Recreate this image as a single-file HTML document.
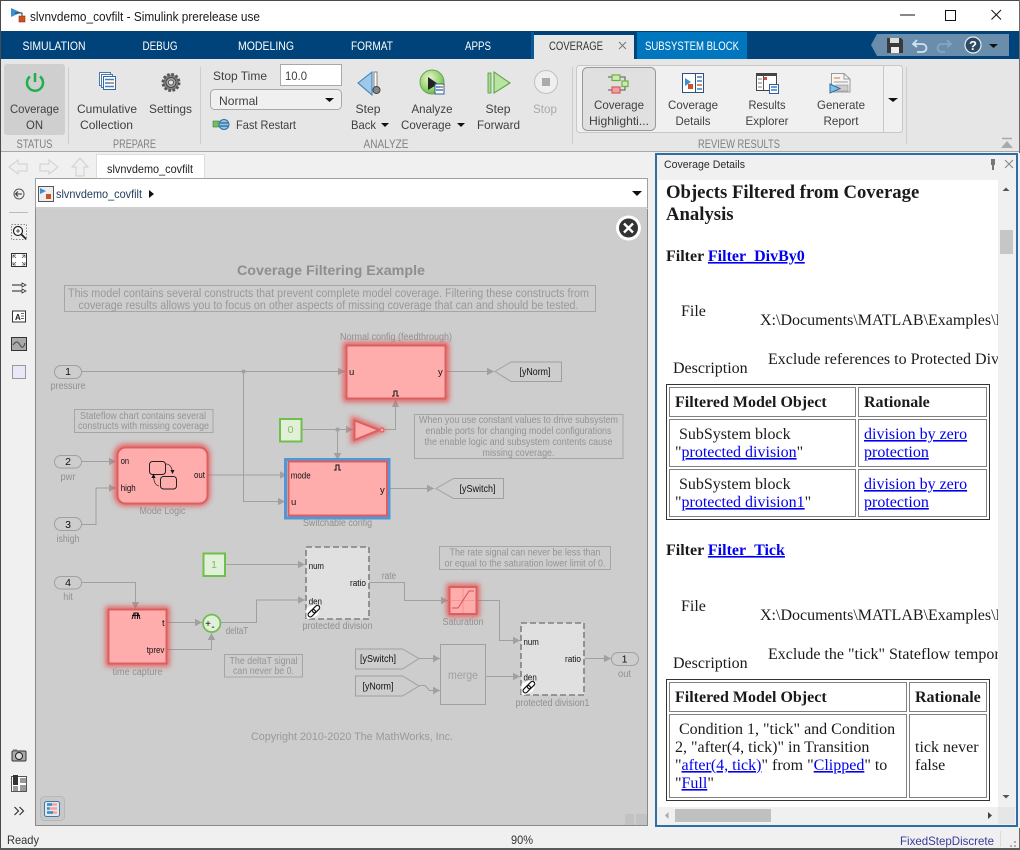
<!DOCTYPE html>
<html><head><meta charset="utf-8"><title>slvnvdemo_covfilt - Simulink prerelease use</title>
<style>
html,body{margin:0;padding:0;width:1020px;height:850px;overflow:hidden;background:#f0f0f0}
svg{display:block}
text{font-family:"Liberation Sans",sans-serif;white-space:pre}
.u{font-size:12px;fill:#404040}
.g{font-size:11.500px;fill:#808080;text-anchor:middle}
.t{font-size:12px;fill:#fff;text-anchor:middle;font-weight:400}
.n{font-size:10.500px;fill:#949494;text-anchor:middle}
.l{font-size:10px;fill:#909090;text-anchor:middle}
.p{font-size:9.500px;fill:#111}
.k{font-size:10.500px;fill:#111;text-anchor:middle}
.s{font-family:"Liberation Serif",serif;font-size:16px;fill:#1a1a1a}
.b{font-family:"Liberation Serif",serif;font-size:16px;font-weight:700;fill:#1a1a1a}
.h{font-family:"Liberation Serif",serif;font-size:18.720px;font-weight:700;fill:#1a1a1a}
.a{fill:#0000ee;text-decoration:underline}
.w{fill:none;stroke:#a0a0a0;stroke-width:1}
.nb{fill:none;stroke:#a6a6a6;stroke-width:1}
</style></head><body>
<svg width="1020" height="850" viewBox="0 0 1020 850" xmlns="http://www.w3.org/2000/svg">
<defs>
<marker id="m" markerUnits="userSpaceOnUse" markerWidth="9" markerHeight="9" refX="7" refY="4" orient="auto"><path d="M0 .3L7 4L0 7.700z" fill="#a0a0a0"/></marker>
<filter id="gl" x="-40%" y="-40%" width="180%" height="180%"><feGaussianBlur stdDeviation="2.600"/></filter>
<clipPath id="cp"><rect x="658" y="180" width="340" height="627"/></clipPath>
<radialGradient id="gr" cx=".4" cy=".35" r=".8"><stop offset="0" stop-color="#e6f5cf"/><stop offset=".6" stop-color="#93cf6b"/><stop offset="1" stop-color="#4e9c3a"/></radialGradient>
</defs>

<!-- window chrome -->
<rect width="1020" height="850" fill="#f0f0f0"/>
<rect x="0" y="0" width="1020" height="31" fill="#fff"/>
<rect x="0" y="0" width="1020" height="1" fill="#4a4a4a"/>
<rect x="0" y="0" width="1" height="848" fill="#4a4a4a"/>
<rect x="1019" y="0" width="1" height="848" fill="#6a6a6a"/>
<path d="M11 8L21 12.500L11 17z" fill="#3d8fd1"/><path d="M15 13H22V17" fill="none" stroke="#333"/><rect x="19" y="16" width="6" height="6" fill="#d1501f" stroke="#8a3a18" stroke-width=".6"/>
<text x="30" y="21" font-size="13" fill="#1a1a1a" textLength="230" lengthAdjust="spacingAndGlyphs">slvnvdemo_covfilt - Simulink prerelease use</text>
<path d="M900 15H915" stroke="#111" stroke-width="1"/>
<rect x="945.500" y="10.500" width="10" height="10" fill="none" stroke="#111"/>
<path d="M991.500 10L1001 19.500M1001 10L991.500 19.500" stroke="#111" stroke-width="1"/>

<!-- tab strip -->
<rect x="1" y="31" width="1018" height="28" fill="#00437a"/>
<text class="t" x="54" y="50" textLength="63" lengthAdjust="spacingAndGlyphs">SIMULATION</text>
<text class="t" x="160" y="50" textLength="35" lengthAdjust="spacingAndGlyphs">DEBUG</text>
<text class="t" x="266" y="50" textLength="56" lengthAdjust="spacingAndGlyphs">MODELING</text>
<text class="t" x="372" y="50" textLength="42" lengthAdjust="spacingAndGlyphs">FORMAT</text>
<text class="t" x="478" y="50" textLength="26" lengthAdjust="spacingAndGlyphs">APPS</text>
<rect x="531" y="32" width="3" height="27" fill="#0a5a96"/>
<rect x="534" y="35" width="100" height="24" fill="#e6e6e6"/>
<text class="t" x="576" y="50" style="fill:#333" textLength="54" lengthAdjust="spacingAndGlyphs">COVERAGE</text>
<path d="M619 42L626 49M626 42L619 49" stroke="#777" stroke-width="1"/>
<rect x="637" y="32" width="110" height="27" fill="#0076be"/>
<text class="t" x="692" y="50" textLength="94" lengthAdjust="spacingAndGlyphs">SUBSYSTEM BLOCK</text>
<path d="M871 45L877 34H1009V56H877z" fill="#6a8dab"/>
<path d="M887 38H901L903 40V53H887z" fill="#3a3a3a"/><rect x="890" y="38" width="9" height="5" fill="#ddd"/><rect x="891" y="47" width="8" height="6" fill="#eee"/>
<path d="M917 40L913 44L917 47M913.500 44H922C928 44 928 52 922 52H917" fill="none" stroke="#cfe3f3" stroke-width="1.800"/>
<path d="M947 40L951 44L947 47M950.500 44H942C936 44 936 52 942 52H945" fill="none" stroke="#87a6c0" stroke-width="1.800"/>
<circle cx="973" cy="45" r="8" fill="#2c4a63" stroke="#e8eef3" stroke-width="1.200"/><text x="973" y="50" font-size="13" font-weight="700" fill="#fff" text-anchor="middle">?</text>
<path d="M989 44H998L993.500 48z" fill="#111"/>

<!-- ribbon -->
<rect x="1" y="59" width="1018" height="92" fill="#e6e6e6"/>
<rect x="1" y="151" width="1018" height="1" fill="#a8a8a8"/>
<rect x="4" y="64" width="61" height="71" rx="3" fill="#cfcfcf"/>
<path d="M68.500 67V144M200.500 67V144M572.500 67V144M906.500 67V144" stroke="#cdcdcd"/>
<path d="M30 76.500A8 8 0 1 0 40 76.500" fill="none" stroke="#1fb04b" stroke-width="2.500"/><path d="M35 73V82" stroke="#1fb04b" stroke-width="2.500"/>
<text class="u" x="10" y="113" textLength="49" lengthAdjust="spacingAndGlyphs">Coverage</text>
<text class="u" x="26" y="129" textLength="17" lengthAdjust="spacingAndGlyphs">ON</text>
<text class="g" x="34.500" y="148" textLength="36" lengthAdjust="spacingAndGlyphs">STATUS</text>
<rect x="99.500" y="72.500" width="11" height="13" fill="#fff" stroke="#4a78ad"/><rect x="101.500" y="74.500" width="11" height="13" fill="#fff" stroke="#4a78ad"/><rect x="103.500" y="76.500" width="12" height="13" fill="#fff" stroke="#3a669b"/>
<path d="M105 79.500H114M105 83H114M105 86.500H114" stroke="#3d7fc4" stroke-width="1.500"/><path d="M110 83H114" stroke="#e8873a" stroke-width="1.500"/>
<text class="u" x="77" y="113" textLength="60" lengthAdjust="spacingAndGlyphs">Cumulative</text>
<text class="u" x="80" y="129" textLength="53" lengthAdjust="spacingAndGlyphs">Collection</text>
<circle cx="171" cy="82.500" r="8" fill="#888" stroke="#555" stroke-width="3" stroke-dasharray="2.500 1.700"/><circle cx="171" cy="82.500" r="5" fill="#aaa" stroke="#444"/><circle cx="171" cy="82.500" r="2.500" fill="#e6e6e6" stroke="#555"/>
<text class="u" x="149" y="113" textLength="43" lengthAdjust="spacingAndGlyphs">Settings</text>
<text class="g" x="134.500" y="148" textLength="43" lengthAdjust="spacingAndGlyphs">PREPARE</text>
<text class="u" x="213" y="80" textLength="54" lengthAdjust="spacingAndGlyphs">Stop Time</text>
<rect x="280.500" y="64.500" width="61" height="21" fill="#fff" stroke="#a8a8a8"/>
<text class="u" x="285" y="80" textLength="22" lengthAdjust="spacingAndGlyphs">10.0</text>
<rect x="210.500" y="89.500" width="131" height="20" rx="4" fill="#f0f0f0" stroke="#a8a8a8"/>
<text class="u" x="219" y="105" textLength="39" lengthAdjust="spacingAndGlyphs">Normal</text>
<path d="M325 98H334L329.500 102z" fill="#111"/>
<rect x="213" y="121" width="6" height="6" fill="#6fbf5a" stroke="#3d7f3a" stroke-width=".6"/><circle cx="224" cy="124.500" r="5" fill="#8fc5ea" stroke="#2f6ea5"/><path d="M220 123H228M228 126H220" stroke="#1a4f80"/>
<text class="u" x="236" y="129" textLength="60" lengthAdjust="spacingAndGlyphs">Fast Restart</text>
<path d="M358 83L372 72V95z" fill="#9dcaea" stroke="#3b7db5"/><rect x="374" y="72" width="3" height="17" fill="#fff" stroke="#666" stroke-width=".8"/><circle cx="376.500" cy="90" r="3.500" fill="#888" stroke="#444"/>
<text class="u" x="368" y="113" text-anchor="middle" textLength="25" lengthAdjust="spacingAndGlyphs">Step</text>
<text class="u" x="351" y="129" textLength="25" lengthAdjust="spacingAndGlyphs">Back</text>
<path d="M381 123H389L385 127z" fill="#111"/>
<circle cx="432" cy="82" r="12" fill="url(#gr)" stroke="#6aa84f"/><path d="M428 77L438 84L428 90z" fill="#222"/><rect x="435" y="84" width="9" height="10" fill="#fff" stroke="#2f5f9a"/><path d="M436 87H443M436 90H443" stroke="#3d7fc4" stroke-width="1.500"/><path d="M440 87H443" stroke="#e8873a" stroke-width="1.500"/>
<text class="u" x="432" y="113" text-anchor="middle" textLength="41" lengthAdjust="spacingAndGlyphs">Analyze</text>
<text class="u" x="401" y="129" textLength="50" lengthAdjust="spacingAndGlyphs">Coverage</text>
<path d="M457 123H465L461 127z" fill="#111"/>
<rect x="488" y="73" width="3" height="20" fill="#a8d98f" stroke="#4e9c3a" stroke-width=".8"/><path d="M494 72L510 83L494 93z" fill="#b9e3a0" stroke="#4e9c3a"/>
<text class="u" x="498" y="113" text-anchor="middle" textLength="25" lengthAdjust="spacingAndGlyphs">Step</text>
<text class="u" x="477" y="129" textLength="43" lengthAdjust="spacingAndGlyphs">Forward</text>
<circle cx="546" cy="82" r="11.500" fill="#efefef" stroke="#c0c0c0"/><rect x="542" y="78" width="8" height="8" fill="#ababab"/>
<text class="u" x="545" y="113" text-anchor="middle" style="fill:#aaa" textLength="24" lengthAdjust="spacingAndGlyphs">Stop</text>
<text class="g" x="386" y="148" textLength="45" lengthAdjust="spacingAndGlyphs">ANALYZE</text>
<rect x="576.500" y="65.500" width="326" height="67" rx="3" fill="#f0f0f0" stroke="#c8c8c8"/>
<path d="M883.500 66V132" stroke="#c8c8c8"/>
<rect x="582.500" y="67.500" width="73" height="63" rx="5" fill="#e0e0e0" stroke="#999"/>
<path d="M608 77H612M620 77H625V84H628M608 90H612M620 90H625V87" fill="none" stroke="#555"/>
<rect x="612" y="75" width="8" height="5.500" fill="#cfe8b8" stroke="#6ab03f" stroke-width="1.200"/><rect x="622" y="81" width="6" height="5.500" fill="#cfe8b8" stroke="#6ab03f" stroke-width="1.200"/><rect x="612" y="87" width="8" height="6" fill="#f2a0a0" stroke="#d85a5a" stroke-width="1.200"/>
<text class="u" x="619" y="109" text-anchor="middle" textLength="50" lengthAdjust="spacingAndGlyphs">Coverage</text>
<text class="u" x="619" y="125" text-anchor="middle" textLength="60" lengthAdjust="spacingAndGlyphs">Highlighti...</text>
<rect x="682.500" y="73.500" width="21" height="19" fill="#fff" stroke="#33507a"/><path d="M695.500 74V92" stroke="#33507a"/>
<path d="M685 78L691 82L685 86z" fill="#3d8fd1"/><rect x="688" y="84" width="5" height="5" fill="#d1501f"/>
<path d="M697 77H702M697 81H702M697 85H702M697 89H702" stroke="#3d7fc4" stroke-width="1.500"/><path d="M697 85H702" stroke="#e8734a" stroke-width="1.500"/>
<text class="u" x="693" y="109" text-anchor="middle" textLength="50" lengthAdjust="spacingAndGlyphs">Coverage</text>
<text class="u" x="693" y="125" text-anchor="middle" textLength="35" lengthAdjust="spacingAndGlyphs">Details</text>
<rect x="756.500" y="73.500" width="20" height="17" fill="#fff" stroke="#444"/><rect x="756" y="73" width="21" height="3" fill="#444"/><path d="M763.500 76V90" stroke="#555"/><path d="M758 79H762M758 83H762M758 87H762" stroke="#777"/><rect x="764" y="77" width="3" height="3" fill="#d84a4a"/>
<rect x="769.500" y="84.500" width="9" height="9" fill="#fff" stroke="#2f5f9a"/><path d="M771 87H777M771 90H777" stroke="#3d7fc4" stroke-width="1.500"/>
<text class="u" x="767" y="109" text-anchor="middle" textLength="37" lengthAdjust="spacingAndGlyphs">Results</text>
<text class="u" x="767" y="125" text-anchor="middle" textLength="43" lengthAdjust="spacingAndGlyphs">Explorer</text>
<path d="M831.500 73.500H844L850 79V92H831.500z" fill="#f6f6f6" stroke="#999"/><path d="M844 74V79H850" fill="none" stroke="#999"/><path d="M834 78H840" stroke="#e0702a"/><path d="M834 82H848" stroke="#999"/><rect x="836" y="85" width="12" height="6" fill="#ccc" stroke="#888" stroke-width=".6"/>
<path d="M830 84L840 88.500L830 93z" fill="#7cc0ea" stroke="#2f6ea5"/>
<text class="u" x="841" y="109" text-anchor="middle" textLength="48" lengthAdjust="spacingAndGlyphs">Generate</text>
<text class="u" x="841" y="125" text-anchor="middle" textLength="35" lengthAdjust="spacingAndGlyphs">Report</text>
<path d="M888 98H898L893 102z" fill="#111"/>
<text class="g" x="739" y="148" textLength="82" lengthAdjust="spacingAndGlyphs">REVIEW RESULTS</text>
<path d="M1002 138.500H1012" stroke="#aaa" stroke-width="1.500"/><path d="M1001 148L1007 141L1013 148z" fill="#aaa"/>

<!-- doc tab row -->
<rect x="1" y="152" width="653" height="27" fill="#f0f0f0"/>
<path d="M9 167L18 160V164H27V171H18V174z" fill="#efefef" stroke="#cfcfcf"/>
<path d="M58 167L49 160V164H40V171H49V174z" fill="#efefef" stroke="#cfcfcf"/>
<path d="M80 158L88 167H84V176H76V167H72z" fill="#efefef" stroke="#cfcfcf"/>
<rect x="96.500" y="154.500" width="108" height="25" fill="#fff" stroke="#dcdcdc"/>
<text x="107" y="173" font-size="12" fill="#222" textLength="86" lengthAdjust="spacingAndGlyphs">slvnvdemo_covfilt</text>

<!-- left toolbar -->
<rect x="1" y="179" width="34" height="647" fill="#f0f0f0"/>
<rect x="35" y="179" width="1" height="647" fill="#8a8a8a"/>
<circle cx="19" cy="194" r="5" fill="#eee" stroke="#555"/><path d="M22 194H16M18 191.500L15.500 194L18 196.500" fill="none" stroke="#333"/>
<path d="M9 212.500H28" stroke="#bbb"/>
<rect x="11.500" y="224.500" width="15" height="15" fill="none" stroke="#888" stroke-dasharray="1.500 1.500"/><circle cx="18" cy="231" r="4.500" fill="#fff" stroke="#222" stroke-width="1.200"/><path d="M21.500 234.500L26 239" stroke="#222" stroke-width="1.800"/><path d="M16 231H20M18 229V233" stroke="#222" stroke-width=".8"/>
<rect x="11.500" y="253.500" width="15" height="13" fill="#fff" stroke="#333"/><path d="M13 255L16 258M13 255H16M13 255V258M25 255L22 258M25 255H22M25 255V258M13 265L16 262M13 265H16M13 265V262M25 265L22 262M25 265H22M25 265V262" stroke="#555" stroke-width=".8" fill="none"/>
<path d="M12 285H25M12 291H25" stroke="#222"/><path d="M22 283L26 285L22 287zM22 289L26 291L22 293z" fill="#fff" stroke="#222" stroke-width=".7"/>
<rect x="12.500" y="311" width="13" height="11" fill="#fff" stroke="#333"/><text x="15" y="320" font-size="8" font-weight="700" fill="#222">A</text><path d="M21 313.500H24M21 316H24M21 318.500H24" stroke="#333" stroke-width=".7"/>
<rect x="11.500" y="337.500" width="15" height="13" fill="#aaa" stroke="#333"/><path d="M13 345C16 341 18 341 20 345S24 347 25 343" fill="none" stroke="#555" stroke-width="1.200"/>
<rect x="12.500" y="365.500" width="13" height="13" fill="#e8e8f8" stroke="#999"/>
<rect x="12" y="751" width="14" height="10" rx="1" fill="#aaa" stroke="#333"/><circle cx="19" cy="756" r="3.500" fill="#ddd" stroke="#222"/><rect x="13" y="749.500" width="4" height="2" fill="#666"/>
<rect x="11.500" y="776.500" width="15" height="15" fill="#fff" stroke="#555"/><rect x="13" y="775" width="5" height="10" fill="#333"/><rect x="13" y="786" width="5" height="5" fill="#999"/><rect x="20" y="778" width="6" height="5" fill="#999"/><rect x="20" y="785" width="6" height="6" fill="#999"/>
<path d="M14.500 807L18.500 811L14.500 815M19.500 807L23.500 811L19.500 815" fill="none" stroke="#333" stroke-width="1.200"/>

<!-- address bar -->
<rect x="36" y="179" width="612" height="30" fill="#fff"/>
<rect x="35.500" y="178.500" width="612" height="29.500" fill="none" stroke="#a0a0a0"/>
<rect x="38.500" y="186.500" width="15" height="15" fill="#eee" stroke="#555"/>
<path d="M40 188L46 191L40 194z" fill="#3d8fd1"/><rect x="46" y="194" width="5" height="5" fill="#d1501f"/>
<text x="56" y="198" font-size="12" fill="#1f3a5a" textLength="86" lengthAdjust="spacingAndGlyphs">slvnvdemo_covfilt</text>
<path d="M149 190L154 194L149 198z" fill="#111"/>
<path d="M632 191H642L637 196z" fill="#111"/>

<!-- canvas -->
<rect x="36" y="209" width="611.500" height="616" fill="#cdcdcd"/>
<path d="M35.500 825.500H647.500V209" fill="none" stroke="#8a8a8a"/>

<!-- close -->
<circle cx="628.500" cy="228" r="12.500" fill="#fff"/><circle cx="628.500" cy="228" r="9.500" fill="#333"/><path d="M624 223.500L633 232.500M633 223.500L624 232.500" stroke="#fff" stroke-width="2.400"/>

<text x="331" y="275" font-size="14" font-weight="700" fill="#8e8e8e" text-anchor="middle" textLength="188" lengthAdjust="spacingAndGlyphs">Coverage Filtering Example</text>
<rect x="64.500" y="285.500" width="531" height="26" class="nb"/>
<text x="328.500" y="297" font-size="11.500" fill="#999" text-anchor="middle" textLength="521" lengthAdjust="spacingAndGlyphs">This model contains several constructs that prevent complete model coverage. Filtering these constructs from</text>
<text x="328.500" y="309" font-size="11.500" fill="#999" text-anchor="middle" textLength="500" lengthAdjust="spacingAndGlyphs">coverage results allows you to focus on other aspects of missing coverage that can and should be tested.</text>

<!-- wires -->
<g class="w">
<path d="M82 371.500H345" marker-end="url(#m)"/>
<path d="M243.500 371.500V501.500H285" marker-end="url(#m)"/>
<path d="M446 371.500H494" marker-end="url(#m)"/>
<path d="M302 429.500H353" marker-end="url(#m)"/>
<path d="M337.500 429.500V460" marker-end="url(#m)"/>
<path d="M385 429.500H395.500V400" marker-end="url(#m)"/>
<path d="M82 461.500H116" marker-end="url(#m)"/>
<path d="M82 524.500H96V488H116" marker-end="url(#m)"/>
<path d="M208 475H287" marker-end="url(#m)"/>
<path d="M390 488.500H434" marker-end="url(#m)"/>
<path d="M82 582.500H135.500V609" marker-end="url(#m)"/>
<path d="M167 622.500H202" marker-end="url(#m)"/>
<path d="M167 649.500H211.500V633" marker-end="url(#m)"/>
<path d="M221 622.500H256.500V600H305" marker-end="url(#m)"/>
<path d="M226 564.500H305" marker-end="url(#m)"/>
<path d="M369 582.500H404.500V600.500H448" marker-end="url(#m)"/>
<path d="M477 600.500H499.500V640.500H520" marker-end="url(#m)"/>
<path d="M419 658.500H440" marker-end="url(#m)"/>
<path d="M419 685.500H425L429.500 690.500H440" marker-end="url(#m)"/>
<path d="M486 676.500H520" marker-end="url(#m)"/>
<path d="M585 658.500H611" marker-end="url(#m)"/>
</g>
<circle cx="243.500" cy="371.500" r="2" fill="#a0a0a0"/><circle cx="337.500" cy="429.500" r="2" fill="#a0a0a0"/>

<!-- inports/outports -->
<g fill="#cdcdcd" stroke="#a0a0a0"><rect x="54.500" y="365.500" width="27" height="13" rx="6.500"/><rect x="54.500" y="455.500" width="27" height="12.500" rx="6.200"/><rect x="54.500" y="517.500" width="27" height="13" rx="6.500"/><rect x="54.500" y="576.500" width="27" height="12.500" rx="6.200"/><rect x="611.500" y="652.500" width="27" height="13" rx="6.500"/></g>
<text class="k" x="68" y="375">1</text><text class="k" x="68" y="465">2</text><text class="k" x="68" y="528">3</text><text class="k" x="68" y="586">4</text><text class="k" x="624.500" y="662.500">1</text>
<text class="l" x="68" y="389" textLength="35" lengthAdjust="spacingAndGlyphs">pressure</text><text class="l" x="68" y="480" textLength="15" lengthAdjust="spacingAndGlyphs">pwr</text><text class="l" x="68" y="542" textLength="23" lengthAdjust="spacingAndGlyphs">ishigh</text><text class="l" x="68" y="600" textLength="9.500" lengthAdjust="spacingAndGlyphs">hit</text><text class="l" x="624.500" y="677" textLength="13" lengthAdjust="spacingAndGlyphs">out</text>

<!-- notes -->
<rect x="74.500" y="409.500" width="138.500" height="23" class="nb"/>
<text class="n" x="143" y="419" textLength="126" lengthAdjust="spacingAndGlyphs">Stateflow chart contains several</text>
<text class="n" x="143.500" y="429" textLength="131" lengthAdjust="spacingAndGlyphs">constructs with missing coverage</text>
<rect x="414.500" y="414.500" width="208.500" height="44" class="nb"/>
<text class="n" x="518.500" y="423" textLength="199" lengthAdjust="spacingAndGlyphs">When you use constant values to drive subsystem</text>
<text class="n" x="518.500" y="434" textLength="186" lengthAdjust="spacingAndGlyphs">enable ports for changing model configurations</text>
<text class="n" x="518.500" y="445" textLength="188" lengthAdjust="spacingAndGlyphs">the enable logic and subsystem contents cause</text>
<text class="n" x="518.500" y="456" textLength="72" lengthAdjust="spacingAndGlyphs">missing coverage.</text>
<rect x="439.500" y="546.500" width="171" height="23" class="nb"/>
<text class="n" x="525" y="555.500" textLength="151" lengthAdjust="spacingAndGlyphs">The rate signal can never be less than</text>
<text class="n" x="525" y="566.500" textLength="161" lengthAdjust="spacingAndGlyphs">or equal to the saturation lower limit of 0.</text>
<rect x="224.500" y="654.500" width="78" height="22.500" class="nb"/>
<text class="n" x="263.500" y="664" textLength="68" lengthAdjust="spacingAndGlyphs">The deltaT signal</text>
<text class="n" x="263.500" y="674" textLength="61" lengthAdjust="spacingAndGlyphs">can never be 0.</text>
<text x="352" y="740" font-size="11" fill="#999" text-anchor="middle" textLength="202" lengthAdjust="spacingAndGlyphs">Copyright 2010-2020 The MathWorks, Inc.</text>

<!-- glows -->
<g fill="none" stroke="#ee3a3a" stroke-width="6" filter="url(#gl)" opacity=".75">
<rect x="346" y="345" width="100" height="54"/>
<rect x="117" y="447" width="90" height="56" rx="8"/>
<rect x="108.500" y="609.500" width="58" height="54"/>
<rect x="449.500" y="587" width="27" height="27"/>
<path d="M354 420V440L379 430z"/>
</g>

<!-- Normal config -->
<rect x="346.500" y="345.500" width="99" height="53" fill="#ffacac" stroke="#dc5f5f" stroke-width="2"/>
<text class="l" x="396" y="340" textLength="112" lengthAdjust="spacingAndGlyphs">Normal config (feedthrough)</text>
<text class="p" x="349" y="375">u</text><text class="p" x="438" y="375">y</text>
<path d="M392 396H394V391H397V396H399" fill="none" stroke="#111" stroke-width="1"/>

<!-- goto -->
<path d="M495 371.500L511 362H561.500V381.500H511z" fill="#cdcdcd" stroke="#a0a0a0"/>
<text class="k" x="535" y="375" textLength="31" lengthAdjust="spacingAndGlyphs">[yNorm]</text>
<path d="M436 488.500L453.500 478.500H503.500V498.500H453.500z" fill="#cdcdcd" stroke="#a0a0a0"/>
<text class="k" x="477.500" y="492" textLength="36" lengthAdjust="spacingAndGlyphs">[ySwitch]</text>

<!-- constant 0 / not -->
<rect x="280" y="419" width="21.500" height="22.500" fill="#e2f0da" stroke="#6fc04b" stroke-width="2"/>
<text x="290.500" y="433" font-size="10.500" fill="#7cc05c" text-anchor="middle">0</text>
<path d="M354.500 420.500V440L379 430z" fill="#ffacac" stroke="#dc5f5f" stroke-width="2"/>
<circle cx="382" cy="430" r="2" fill="#ffacac" stroke="#dc5f5f" stroke-width="1.200"/>

<!-- Mode Logic -->
<rect x="117.500" y="447.500" width="90" height="56" rx="8" fill="#ffacac" stroke="#dc5f5f" stroke-width="2"/>
<text class="p" x="120.700" y="464" textLength="8.300" lengthAdjust="spacingAndGlyphs">on</text><text class="p" x="120.700" y="491" textLength="15" lengthAdjust="spacingAndGlyphs">high</text><text class="p" x="194" y="478" textLength="11" lengthAdjust="spacingAndGlyphs">out</text>
<text class="l" x="162.500" y="514" textLength="46" lengthAdjust="spacingAndGlyphs">Mode Logic</text>
<rect x="149.500" y="461.500" width="16" height="13" rx="3" fill="none" stroke="#222"/>
<rect x="160.500" y="476.500" width="16" height="12.500" rx="3" fill="none" stroke="#222"/>
<path d="M166 464C170 464 172 467 172.500 473" fill="none" stroke="#333" stroke-width=".8"/><path d="M170.500 470H174.500L172.500 474z" fill="#111"/>
<path d="M159 486C155 485 154 482 153.500 476" fill="none" stroke="#333" stroke-width=".8"/><path d="M151.500 478H155.500L153.500 473.500z" fill="#111"/>

<!-- Switchable config -->
<rect x="285.500" y="459.500" width="103.500" height="58.500" fill="none" stroke="#4f97d8" stroke-width="3"/>
<rect x="288.500" y="461.500" width="98.500" height="54" fill="#ffacac" stroke="#dc5f5f" stroke-width="2"/>
<text class="p" x="290.700" y="478.500" textLength="20" lengthAdjust="spacingAndGlyphs">mode</text><text class="p" x="291" y="505">u</text><text class="p" x="380" y="493">y</text>
<path d="M334 470H336V465H339V470H341" fill="none" stroke="#111"/>
<text class="l" x="337.500" y="526" textLength="69" lengthAdjust="spacingAndGlyphs">Switchable config</text>

<!-- time capture -->
<rect x="108.500" y="609.500" width="58" height="54" fill="#ffacac" stroke="#dc5f5f" stroke-width="2"/>
<path d="M132 619L134 613H138L140 619M132 615.500H140M135 613V619M137.500 613V619" fill="none" stroke="#111" stroke-width="1"/>
<text class="p" x="162" y="626">t</text><text class="p" x="146.700" y="653" textLength="17.700" lengthAdjust="spacingAndGlyphs">tprev</text>
<text class="l" x="137.500" y="675" textLength="50" lengthAdjust="spacingAndGlyphs">time capture</text>

<!-- sum -->
<circle cx="211.700" cy="623.300" r="8.700" fill="#e2f0da" stroke="#6fc04b" stroke-width="1.800"/>
<text x="208" y="627" font-size="10" fill="#111" text-anchor="middle">+</text><text x="213" y="630" font-size="10" fill="#111" text-anchor="middle">-</text>
<text class="l" x="237" y="634" textLength="22.500" lengthAdjust="spacingAndGlyphs">deltaT</text>

<!-- constant 1 -->
<rect x="203.500" y="553.500" width="21.500" height="22.500" fill="#e2f0da" stroke="#6fc04b" stroke-width="2"/>
<text x="214" y="568" font-size="10.500" fill="#7cc05c" text-anchor="middle">1</text>

<!-- protected division -->
<rect x="306" y="547" width="63" height="72" fill="#e0e0e0" stroke="#808080" stroke-width="1.600" stroke-dasharray="6 3"/>
<text class="p" x="308.700" y="569" textLength="15.300" lengthAdjust="spacingAndGlyphs">num</text><text class="p" x="308.700" y="604.500" textLength="13.300" lengthAdjust="spacingAndGlyphs">den</text><text class="p" x="350" y="586" textLength="16" lengthAdjust="spacingAndGlyphs">ratio</text>
<path d="M306.500 618V608L315 604L321 606L318 615L310 619z" fill="#fff"/>
<g fill="none" stroke="#111" stroke-width="1.200">
<rect x="307.500" y="611" width="8.500" height="4.500" rx="2.200" transform="rotate(-45 311.700 613.200)"/>
<rect x="311.700" y="606.800" width="8.500" height="4.500" rx="2.200" transform="rotate(-45 316 609)"/>
</g>
<text class="l" x="337.500" y="629" textLength="70" lengthAdjust="spacingAndGlyphs">protected division</text>
<text class="l" x="389" y="579" textLength="14.300" lengthAdjust="spacingAndGlyphs">rate</text>

<!-- saturation -->
<rect x="449.500" y="587" width="27" height="27" fill="#ffacac" stroke="#dc5f5f" stroke-width="2"/>
<path d="M463 588V613M450 600.500H476" stroke="#ef8f8f" stroke-width=".8"/>
<path d="M452 608H458L469 591H474" fill="none" stroke="#d85050" stroke-width="1"/>
<text class="l" x="463" y="625" textLength="41" lengthAdjust="spacingAndGlyphs">Saturation</text>

<!-- from -->
<path d="M355.500 649H402.500L419 658.500L402.500 669H355.500z" fill="#cdcdcd" stroke="#a0a0a0"/>
<text class="k" x="378" y="662" textLength="36" lengthAdjust="spacingAndGlyphs">[ySwitch]</text>
<path d="M355.500 676H402.500L419 686L402.500 696H355.500z" fill="#cdcdcd" stroke="#a0a0a0"/>
<text class="k" x="378" y="689.500" textLength="31" lengthAdjust="spacingAndGlyphs">[yNorm]</text>

<!-- merge -->
<rect x="440.500" y="644.500" width="45" height="60" fill="#cdcdcd" stroke="#a0a0a0"/>
<text x="463" y="679" font-size="11.500" fill="#a0a0a0" text-anchor="middle" textLength="30" lengthAdjust="spacingAndGlyphs">merge</text>

<!-- protected division1 -->
<rect x="521" y="623" width="63" height="72" fill="#e0e0e0" stroke="#808080" stroke-width="1.600" stroke-dasharray="6 3"/>
<text class="p" x="523.500" y="645" textLength="15.300" lengthAdjust="spacingAndGlyphs">num</text><text class="p" x="523.500" y="680.500" textLength="13.300" lengthAdjust="spacingAndGlyphs">den</text><text class="p" x="565" y="662" textLength="16" lengthAdjust="spacingAndGlyphs">ratio</text>
<path d="M521.500 694V684L530 680L536 682L533 691L525 695z" fill="#fff"/>
<g fill="none" stroke="#111" stroke-width="1.200">
<rect x="522.500" y="687" width="8.500" height="4.500" rx="2.200" transform="rotate(-45 526.700 689.200)"/>
<rect x="526.700" y="682.800" width="8.500" height="4.500" rx="2.200" transform="rotate(-45 531 685)"/>
</g>
<text class="l" x="552.500" y="706" textLength="74" lengthAdjust="spacingAndGlyphs">protected division1</text>

<!-- bottom-left button -->
<rect x="40.500" y="796.500" width="24" height="24" rx="4" fill="#c8c8c8" stroke="#b8b8b8"/>
<rect x="44.500" y="801.500" width="15" height="15" rx="2" fill="#e8e8e8" stroke="#3d7aa8"/>
<path d="M47 804.500H57M47 808.500H57M47 812.500H57" stroke="#f2a4a4" stroke-width="2.500"/><path d="M47 804.500H52M47 808.500H49.500M47 812.500H53" stroke="#2f8fd0" stroke-width="2.500"/>
<rect x="625" y="814" width="9" height="11" fill="#c2c2c2"/><rect x="636" y="814" width="11" height="11" fill="#c2c2c2"/>

<!-- right panel -->
<rect x="655" y="153" width="365" height="675" fill="#f0f0f0"/>
<rect x="656" y="154" width="361" height="672" fill="#f0f0f0" stroke="#2f6ea5" stroke-width="2"/>
<text x="664" y="168" font-size="11" fill="#2a2a2a" textLength="81" lengthAdjust="spacingAndGlyphs">Coverage Details</text>
<path d="M991 159H995V165H994V170H992V165H991z" fill="#777"/>
<path d="M1005 160L1013 168M1013 160L1005 168" stroke="#888" stroke-width="1.100"/>
<rect x="658" y="180" width="340" height="627" fill="#fff"/>
<g clip-path="url(#cp)">
<text class="h" x="666" y="198">Objects Filtered from Coverage</text>
<text class="h" x="666" y="220">Analysis</text>
<text class="b" x="666" y="261">Filter <tspan class="a">Filter_DivBy0</tspan></text>
<text class="s" x="681" y="316">File</text>
<text class="s" x="760" y="325">X:\Documents\MATLAB\Examples\R2020b</text>
<text class="s" x="768" y="364">Exclude references to Protected Division</text>
<text class="s" x="673" y="373">Description</text>
<g fill="none" stroke="#808080">
<rect x="666.500" y="384.500" width="323" height="135" stroke="#333"/>
<rect x="669.500" y="387.500" width="186" height="29"/><rect x="858.500" y="387.500" width="128" height="29"/>
<rect x="669.500" y="419.500" width="186" height="47"/><rect x="858.500" y="419.500" width="128" height="47"/>
<rect x="669.500" y="469.500" width="186" height="47"/><rect x="858.500" y="469.500" width="128" height="47"/>
</g>
<text class="b" x="675" y="407">Filtered Model Object</text><text class="b" x="864" y="407">Rationale</text>
<text class="s" x="679" y="439">SubSystem block</text>
<text class="s" x="675" y="457">"<tspan class="a">protected division</tspan>"</text>
<text class="s a" x="864" y="439">division by zero</text><text class="s a" x="864" y="457">protection</text>
<text class="s" x="679" y="489">SubSystem block</text>
<text class="s" x="675" y="507">"<tspan class="a">protected division1</tspan>"</text>
<text class="s a" x="864" y="489">division by zero</text><text class="s a" x="864" y="507">protection</text>
<text class="b" x="666" y="555">Filter <tspan class="a">Filter_Tick</tspan></text>
<text class="s" x="681" y="611">File</text>
<text class="s" x="760" y="620">X:\Documents\MATLAB\Examples\R2020b</text>
<text class="s" x="768" y="659">Exclude the "tick" Stateflow temporal</text>
<text class="s" x="673" y="668">Description</text>
<g fill="none" stroke="#808080">
<rect x="666.500" y="679.500" width="323" height="121" stroke="#333"/>
<rect x="669.500" y="682.500" width="237" height="29"/><rect x="909.500" y="682.500" width="77" height="29"/>
<rect x="669.500" y="714.500" width="237" height="83"/><rect x="909.500" y="714.500" width="77" height="83"/>
</g>
<text class="b" x="675" y="702">Filtered Model Object</text><text class="b" x="915" y="702">Rationale</text>
<text class="s" x="679" y="734">Condition 1, "tick" and Condition</text>
<text class="s" x="675" y="752">2, "after(4, tick)" in Transition</text>
<text class="s" x="675" y="770">"<tspan class="a">after(4, tick)</tspan>" from "<tspan class="a">Clipped</tspan>" to</text>
<text class="s" x="675" y="788">"<tspan class="a">Full</tspan>"</text>
<text class="s" x="915" y="752">tick never</text><text class="s" x="915" y="770">false</text>
</g>
<rect x="1000" y="230" width="13" height="24" fill="#c6c6c6"/>
<path d="M1002.500 191H1009.500L1006 187.500z" fill="#555"/>
<path d="M1002.500 795H1009.500L1006 798.500z" fill="#555"/>
<rect x="675" y="809" width="96" height="13" fill="#c0c0c0"/>
<path d="M668.500 812V819L665 815.500z" fill="#aaa"/>
<path d="M988 812V819L992 815.500z" fill="#444"/>
<rect x="998" y="807" width="17" height="17" fill="#e6e6e6"/>

<!-- status bar -->
<rect x="1" y="828" width="1018" height="20" fill="#f0f0f0"/>
<rect x="1" y="826" width="653" height="2" fill="#f0f0f0"/>
<text x="7" y="844" font-size="12" fill="#333" textLength="32" lengthAdjust="spacingAndGlyphs">Ready</text>
<text x="522" y="844" font-size="12" fill="#333" text-anchor="middle" textLength="22" lengthAdjust="spacingAndGlyphs">90%</text>
<text x="900" y="845" font-size="12" fill="#3a3a9c" textLength="94" lengthAdjust="spacingAndGlyphs">FixedStepDiscrete</text>
<path d="M1000.500 831V847" stroke="#dcdcdc"/>
<path d="M1014 841h2v2h-2zM1010 845h2v2h-2zM1014 845h2v2h-2z" fill="#b0b0b0"/>
<rect x="0" y="848" width="1020" height="2" fill="#5a5a5a"/>
</svg>
</body></html>
